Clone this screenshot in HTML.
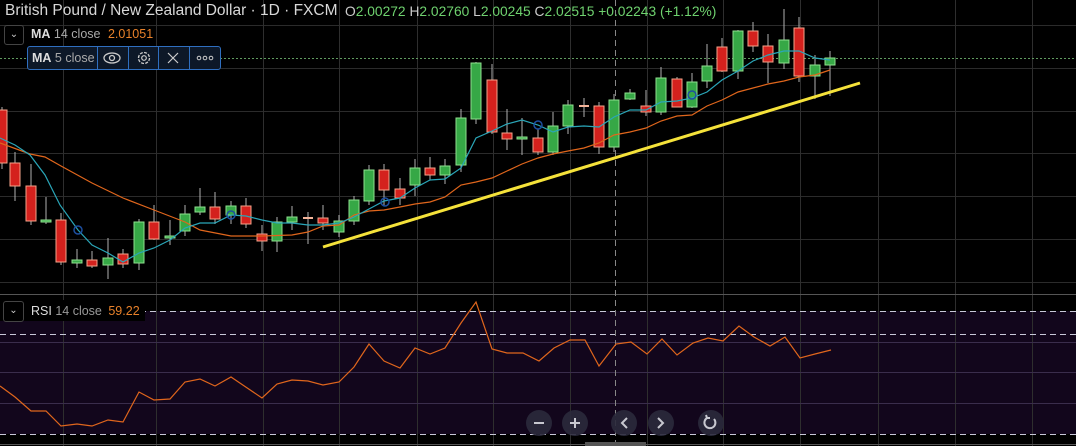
<!DOCTYPE html>
<html><head><meta charset="utf-8"><style>
*{margin:0;padding:0}
body{width:1076px;height:446px;background:#000;overflow:hidden;position:relative;font-family:"Liberation Sans",sans-serif}
.t{position:absolute;white-space:nowrap}
</style></head><body>
<svg width="1076" height="446" style="position:absolute;left:0;top:0">
<rect x="0" y="311" width="1076" height="123" fill="#12061c"/>
<g stroke="#2b2b2b" stroke-width="1">
<line x1="0" y1="25.5" x2="1076" y2="25.5"/><line x1="0" y1="68.5" x2="1076" y2="68.5"/><line x1="0" y1="111.5" x2="1076" y2="111.5"/><line x1="0" y1="153.5" x2="1076" y2="153.5"/><line x1="0" y1="196.5" x2="1076" y2="196.5"/><line x1="0" y1="239.5" x2="1076" y2="239.5"/><line x1="0" y1="282.5" x2="1076" y2="282.5"/>
</g>
<g stroke="#2e2e2e">
<line x1="63.5" y1="0" x2="63.5" y2="446"/><line x1="156.5" y1="0" x2="156.5" y2="446"/><line x1="263.5" y1="0" x2="263.5" y2="446"/><line x1="339.5" y1="0" x2="339.5" y2="446"/><line x1="417.5" y1="0" x2="417.5" y2="446"/><line x1="493.5" y1="0" x2="493.5" y2="446"/><line x1="570.5" y1="0" x2="570.5" y2="446"/><line x1="647.5" y1="0" x2="647.5" y2="446"/><line x1="723.5" y1="0" x2="723.5" y2="446"/><line x1="800.5" y1="0" x2="800.5" y2="446"/><line x1="878.5" y1="0" x2="878.5" y2="446"/><line x1="955.5" y1="0" x2="955.5" y2="446"/><line x1="1032.5" y1="0" x2="1032.5" y2="446"/>
</g>
<g stroke="#3a2d4c"><line x1="0" y1="342.5" x2="1076" y2="342.5"/><line x1="0" y1="372.5" x2="1076" y2="372.5"/><line x1="0" y1="403.5" x2="1076" y2="403.5"/></g>
<line x1="0" y1="294.5" x2="1076" y2="294.5" stroke="#555" />
<line x1="0" y1="444.5" x2="1076" y2="444.5" stroke="#555" />
<g stroke="#c8c8d8" stroke-dasharray="6,4" stroke-width="1"><line x1="0" y1="311.5" x2="1076" y2="311.5"/><line x1="0" y1="334.5" x2="1076" y2="334.5"/><line x1="0" y1="434.5" x2="1076" y2="434.5"/></g>
<line x1="615.5" y1="0" x2="615.5" y2="446" stroke="#888" stroke-dasharray="6,4"/>
<line x1="0" y1="58.5" x2="1076" y2="58.5" stroke="#5f9a5f" stroke-dasharray="2,2"/>
<g stroke="#b0b0b0" stroke-width="1">
<line x1="2" y1="107" x2="2" y2="169"/><line x1="15" y1="152" x2="15" y2="201"/><line x1="31" y1="164" x2="31" y2="225"/><line x1="46" y1="197" x2="46" y2="224"/><line x1="61" y1="213" x2="61" y2="265"/><line x1="77" y1="249" x2="77" y2="268"/><line x1="92" y1="251" x2="92" y2="268"/><line x1="108" y1="238" x2="108" y2="279"/><line x1="123" y1="249" x2="123" y2="268"/><line x1="139" y1="219" x2="139" y2="270"/><line x1="154" y1="205" x2="154" y2="240"/><line x1="170" y1="220" x2="170" y2="245"/><line x1="185" y1="205" x2="185" y2="236"/><line x1="200" y1="188" x2="200" y2="215"/><line x1="215" y1="192" x2="215" y2="224"/><line x1="231" y1="201" x2="231" y2="224"/><line x1="246" y1="198" x2="246" y2="228"/><line x1="262" y1="225" x2="262" y2="251"/><line x1="277" y1="217" x2="277" y2="252"/><line x1="292" y1="206" x2="292" y2="230"/><line x1="308" y1="212" x2="308" y2="244"/><line x1="323" y1="205" x2="323" y2="230"/><line x1="339" y1="215" x2="339" y2="237"/><line x1="354" y1="196" x2="354" y2="225"/><line x1="369" y1="165" x2="369" y2="205"/><line x1="384" y1="164" x2="384" y2="206"/><line x1="400" y1="178" x2="400" y2="205"/><line x1="415" y1="159" x2="415" y2="196"/><line x1="430" y1="157" x2="430" y2="180"/><line x1="445" y1="159" x2="445" y2="184"/><line x1="461" y1="109" x2="461" y2="172"/><line x1="476" y1="62" x2="476" y2="124"/><line x1="492" y1="64" x2="492" y2="134"/><line x1="507" y1="109" x2="507" y2="150"/><line x1="522" y1="118" x2="522" y2="155"/><line x1="538" y1="129" x2="538" y2="155"/><line x1="553" y1="112" x2="553" y2="155"/><line x1="568" y1="100" x2="568" y2="134"/><line x1="584" y1="98" x2="584" y2="117"/><line x1="599" y1="102" x2="599" y2="154"/><line x1="614" y1="94" x2="614" y2="152"/><line x1="630" y1="89" x2="630" y2="100"/><line x1="646" y1="90" x2="646" y2="116"/><line x1="661" y1="67" x2="661" y2="115"/><line x1="677" y1="77" x2="677" y2="107"/><line x1="692" y1="73" x2="692" y2="108"/><line x1="707" y1="44" x2="707" y2="88"/><line x1="722" y1="38" x2="722" y2="72"/><line x1="738" y1="30" x2="738" y2="79"/><line x1="753" y1="22" x2="753" y2="52"/><line x1="768" y1="34" x2="768" y2="83"/><line x1="784" y1="9" x2="784" y2="69"/><line x1="799" y1="17" x2="799" y2="82"/><line x1="815" y1="55" x2="815" y2="99"/><line x1="830" y1="51" x2="830" y2="96"/>
</g>
<g fill="#d4211d" stroke="#f4a48a" stroke-width="1">
<rect x="-3" y="110" width="10" height="53"/><rect x="10" y="163" width="10" height="23"/><rect x="26" y="186" width="10" height="35"/><rect x="56" y="220" width="10" height="42"/><rect x="87" y="260" width="10" height="6"/><rect x="118" y="254" width="10" height="10"/><rect x="149" y="222" width="10" height="17"/><rect x="210" y="207" width="10" height="12"/><rect x="241" y="206" width="10" height="18"/><rect x="257" y="234" width="10" height="7"/><rect x="318" y="218" width="10" height="5"/><rect x="379" y="170" width="10" height="20"/><rect x="395" y="189" width="10" height="9"/><rect x="425" y="168" width="10" height="7"/><rect x="487" y="80" width="10" height="52"/><rect x="502" y="133" width="10" height="6"/><rect x="533" y="138" width="10" height="14"/><rect x="594" y="106" width="10" height="41"/><rect x="641" y="106" width="10" height="6"/><rect x="672" y="79" width="10" height="28"/><rect x="717" y="47" width="10" height="24"/><rect x="748" y="31" width="10" height="15"/><rect x="763" y="46" width="10" height="16"/><rect x="794" y="28" width="10" height="48"/>
</g>
<g fill="#36a846" stroke="#8ee08e" stroke-width="1">
<rect x="41" y="220" width="10" height="2"/><rect x="72" y="260" width="10" height="3"/><rect x="103" y="258" width="10" height="7"/><rect x="134" y="222" width="10" height="41"/><rect x="165" y="236" width="10" height="2"/><rect x="180" y="214" width="10" height="17"/><rect x="195" y="207" width="10" height="5"/><rect x="226" y="206" width="10" height="9"/><rect x="272" y="222" width="10" height="19"/><rect x="287" y="217" width="10" height="5"/><rect x="334" y="221" width="10" height="11"/><rect x="349" y="200" width="10" height="21"/><rect x="364" y="170" width="10" height="31"/><rect x="410" y="168" width="10" height="17"/><rect x="440" y="166" width="10" height="9"/><rect x="456" y="118" width="10" height="47"/><rect x="471" y="63" width="10" height="56"/><rect x="517" y="137" width="10" height="2"/><rect x="548" y="126" width="10" height="26"/><rect x="563" y="105" width="10" height="21"/><rect x="609" y="100" width="10" height="47"/><rect x="625" y="93" width="10" height="6"/><rect x="656" y="78" width="10" height="34"/><rect x="687" y="82" width="10" height="25"/><rect x="702" y="66" width="10" height="15"/><rect x="733" y="31" width="10" height="40"/><rect x="779" y="40" width="10" height="23"/><rect x="810" y="65" width="10" height="11"/><rect x="825" y="58" width="10" height="7"/>
</g>
<g stroke="#f4b49a" stroke-width="2"><line x1="303" y1="218" x2="313" y2="218"/><line x1="579" y1="106" x2="589" y2="106"/></g>
<polyline fill="none" stroke="#e0661c" stroke-width="1.2" points="0,143 30,154 45,157 61,166 92,183 123,198 154,210 185,222 200,230 231,236 262,236 292,235 308,232 323,226 339,225 354,215 369,211 384,210 400,207 415,204 430,202 445,197 461,185 476,182 492,178 507,171 522,164 538,158 553,154 568,151 584,148 599,143 614,135 630,132 646,128 661,121 677,116 692,115 707,106 722,100 738,92 753,88 768,84 784,81 799,77 815,75 830,70"/>
<polyline fill="none" stroke="#2aa6b8" stroke-width="1.2" points="0,138 15,145 30,155 45,175 60,205 78,230 92,245 108,253 123,262 139,253 154,248 170,240 185,228 200,223 215,223 231,215 246,216 262,220 277,223 292,223 308,225 323,225 339,223 354,217 369,209 384,201 400,198 415,188 430,180 445,179 461,168 476,138 492,131 507,124 522,120 538,125 553,132 568,127 584,126 599,127 614,117 630,110 646,110 661,102 677,101 692,98 707,92 722,80 738,71 753,61 768,55 784,51 799,51 815,58 830,60"/>
<g fill="none" stroke="#1d4fa0" stroke-width="1.5"><circle cx="78" cy="230" r="4"/><circle cx="231" cy="215" r="4"/><circle cx="385" cy="202" r="4"/><circle cx="538" cy="125" r="4"/><circle cx="692" cy="95" r="4"/></g>
<line x1="323" y1="247" x2="860" y2="83" stroke="#f5e23a" stroke-width="3"/>
<polyline fill="none" stroke="#e0661c" stroke-width="1.2" points="0,386 15,397 31,411 46,411 61,426 77,424 92,426 108,420 123,422 139,392 154,400 170,399 185,382 200,379 215,386 231,377 262,398 277,384 292,380 308,381 323,385 339,382 354,367 369,344 384,361 400,368 415,348 430,354 445,348 461,323 476,302 492,349 507,353 523,353 539,361 554,348 570,340 585,340 599,366 616,344 631,342 647,354 662,339 677,355 693,343 708,338 723,341 739,326 754,337 770,346 785,337 800,358 815,354 831,350"/>
<g fill="#2b2a3c" opacity="0.9"><circle cx="539" cy="423" r="13"/><circle cx="575" cy="423" r="13"/><circle cx="624" cy="423" r="13"/><circle cx="661" cy="423" r="13"/><circle cx="711" cy="423" r="13"/></g>
<g stroke="#c8c8d0" stroke-width="2" fill="none"><line x1="534" y1="423" x2="544" y2="423"/><line x1="570" y1="423" x2="580" y2="423"/><line x1="575" y1="418" x2="575" y2="428"/><polyline points="627,418 622,423 627,428"/><polyline points="658,418 663,423 658,428"/><path d="M707 418 A5.5 5.5 0 1 0 714 419"/><polyline points="706,415 707,418 710,418"/></g>
<rect x="585" y="442" width="61" height="4" fill="#555"/>
</svg>
<div class="t" style="left:5px;top:2px;font-size:15.5px;color:#d8d8d8">British Pound / New Zealand Dollar · 1D · FXCM</div>
<div class="t" style="left:345px;top:4px;font-size:13.8px;color:#6fd26f"><span style="color:#ccc">O</span>2.00272 <span style="color:#ccc">H</span>2.02760 <span style="color:#ccc">L</span>2.00245 <span style="color:#ccc">C</span>2.02515 +0.02243 (+1.12%)</div>
<div class="t" style="left:4px;top:25px;width:18px;height:18px;border:1px solid #444;border-radius:3px;color:#ccc;font-size:10px;text-align:center;line-height:18px">⌄</div>
<div class="t" style="left:31px;top:27px;font-size:12.5px;color:#aaa"><b style="color:#ddd">MA</b> 14 close <span style="color:#e8812a;margin-left:4px">2.01051</span></div>
<div class="t" style="left:27px;top:46px;width:192px;height:22px;border:1px solid #2f6fc0;border-radius:3px;background:#0d1828;font-size:12.5px;color:#aaa;line-height:22px">
<span style="position:absolute;left:4px"><b style="color:#ddd">MA</b> 5 close</span>
<span style="position:absolute;left:69px;top:0;height:22px;border-left:1px solid #2f6fc0"></span>
<span style="position:absolute;left:100px;top:0;height:22px;border-left:1px solid #2f6fc0"></span>
<span style="position:absolute;left:130px;top:0;height:22px;border-left:1px solid #2f6fc0"></span>
<span style="position:absolute;left:161px;top:0;height:22px;border-left:1px solid #2f6fc0"></span>
<svg style="position:absolute;left:73px;top:4px" width="22" height="14"><ellipse cx="11" cy="7" rx="8" ry="5" fill="none" stroke="#ccc" stroke-width="1.3"/><circle cx="11" cy="7" r="2.5" fill="none" stroke="#ccc" stroke-width="1.3"/></svg>
<svg style="position:absolute;left:108px;top:3px" width="16" height="16"><circle cx="8" cy="8" r="5.5" fill="none" stroke="#ccc" stroke-width="1.3" stroke-dasharray="3,1.3"/><circle cx="8" cy="8" r="2.3" fill="none" stroke="#ccc" stroke-width="1.2"/></svg>
<svg style="position:absolute;left:139px;top:5px" width="12" height="12"><path d="M1 1L11 11M11 1L1 11" stroke="#ccc" stroke-width="1.2"/></svg>
<svg style="position:absolute;left:167px;top:8px" width="20" height="6"><g fill="none" stroke="#ccc"><circle cx="4" cy="3" r="1.8"/><circle cx="10" cy="3" r="1.8"/><circle cx="16" cy="3" r="1.8"/></g></svg>
</div>
<div class="t" style="left:0;top:300px;width:145px;height:21px;background:#000"></div>
<div class="t" style="left:3px;top:301px;width:19px;height:19px;border:1px solid #444;border-radius:3px;color:#ccc;font-size:10px;text-align:center;line-height:18px">⌄</div>
<div class="t" style="left:31px;top:304px;font-size:12.5px;color:#999"><span style="color:#ddd">RSI</span> 14 close <span style="color:#e8812a;margin-left:3px">59.22</span></div>
</body></html>
